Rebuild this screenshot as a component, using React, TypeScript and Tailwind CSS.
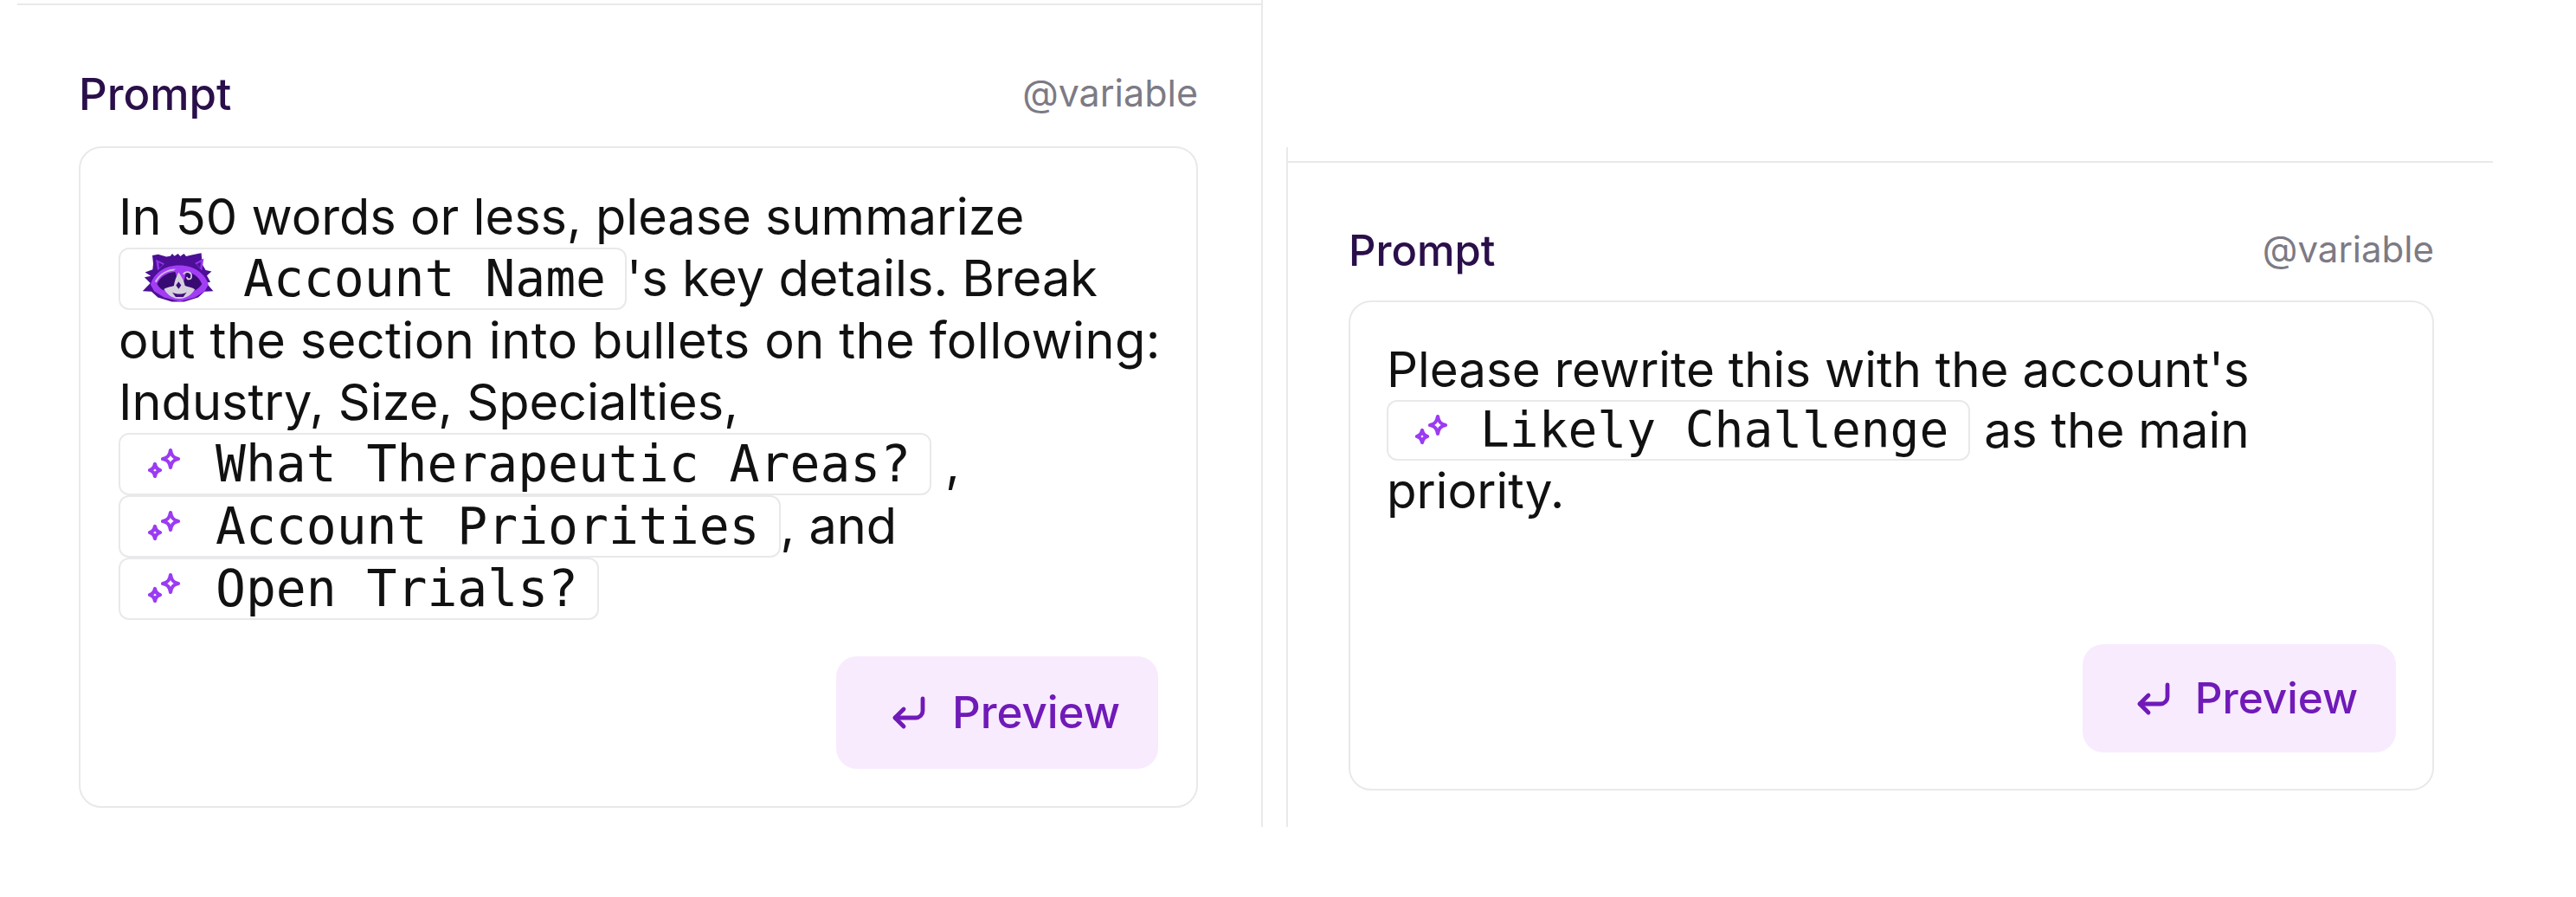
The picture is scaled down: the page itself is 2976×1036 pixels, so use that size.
import React from 'react';
import { CornerDownLeft } from 'lucide-react';

const Sparkles: React.FC = () => (
    <svg className="w-[40px] h-[40px] shrink-0" viewBox="0 0 40 40" fill="none" stroke="#9b3bf2" strokeWidth="4.200" strokeLinejoin="round">
        <path d="M27 4c1 6 3 9 9 10-6 1-8 4-9 10-1-6-3-9-9-10 6-1 8-4 9-10z" />
        <path d="M9 20c.8 4 2 6 6 7-4 1-5.200 3-6 7-.8-4-2-6-6-7 4-1 5.200-3 6-7z" />
    </svg>
);

const Raccoon: React.FC = () => (
    <svg className="w-[84px] h-[62px] shrink-0" viewBox="198 48 244 184">
        <path d="M228 60l20-4 28 8 14-2 6-8 8 8 12-8 8 9 12-9 8 9 12-3 28-6 12-2 3 38 12 20 20 5-16 14 12 22-14 3 24 28-30 2-22 20-48 15h-42l-48-15-22-20-30-2 26-27-20-20 22-5-20-12 26-10 2-20z" fill="#4c0f96" />
        <path d="M240 74l30 14-24 24zM404 70l-30 16 24 26z" fill="#9333ea" />
        <path d="M250 84l14 8-12 12zM394 82l-14 8 12 12z" fill="#4c0f96" />
        <path d="M222 160c8-34 44-66 98-66s92 32 100 66l-12 22-34 22-52 14-54-14-34-22z" fill="#a33df5" />
        <path d="M244 158c10-24 34-40 62-42l14 42-30 24c-18 4-36-6-46-24zM398 158c-10-24-30-40-54-42l-10 42 22 24c16 2 32-8 42-24z" fill="#380b72" />
        <path d="M236 150c14-26 40-44 72-44l-6 6c-26 2-46 14-60 40z" fill="#cdbbe6" />
        <path d="M318 118c-10 18-14 32-16 46-10 4-28 6-34 12 14 22 34 32 52 32s40-10 54-32c-8-6-24-8-34-12-2-12-10-30-22-46z" fill="#d5d0dc" />
        <path d="M318 150l9 12-9 13-9-13zM296 186c14 8 36 8 50 0l-12 16h-26z" fill="#3f0d80" />
        <path d="M334 124c10-12 28-8 28 6s-14 14-16 4" fill="none" stroke="#d5d0dc" strokeWidth="5" />
    </svg>
);

const Chip: React.FC<{ label: string; icon?: 'sparkles' | 'raccoon'; small?: boolean }> = ({ label, icon = 'sparkles', small = false }) => (
    <span className={`inline-flex items-center align-top rounded-[12px] border-2 border-[#e9e9eb] whitespace-nowrap tracking-normal [font-family:'DejaVu_Sans_Mono',monospace] ${small ? 'h-[70px] text-[56.200px] leading-[68px] pr-[23px]' : 'h-[72px] text-[58px] leading-[70px] pr-[22px]'} ${icon === 'raccoon' ? 'pl-[26px] gap-[32px]' : small ? 'pl-[30px] gap-[36px]' : 'pl-[31px] gap-[39px]'}`}>
        {icon === 'raccoon' ? <Raccoon /> : <Sparkles />}
        {label}
    </span>
);

const PromptCard: React.FC<{ cardClass: string; labelClass: string; variableClass: string; textClass: string; buttonRowClass: string; buttonClass: string; children: React.ReactNode }> = ({ cardClass, labelClass, variableClass, textClass, buttonRowClass, buttonClass, children }) => (
    <div>
        <div className="flex items-center justify-between">
            <span className={`font-medium text-[#2a0f4a] ${labelClass}`}>Prompt</span>
            <span className={`text-[#7d7a85] pb-[3px] ${variableClass}`}>@variable</span>
        </div>
        <div className={`flex flex-col rounded-[26px] border-2 border-[#e9e9eb] ${cardClass}`}>
            <div className={`text-[#111111] ${textClass}`}>{children}</div>
            <div className={`flex justify-end mt-auto ${buttonRowClass}`}>
                <button className={`flex items-center justify-end rounded-[24px] bg-[#f8ebfe] text-[#701ab8] font-medium pr-[44px] ${buttonClass}`}>
                    <CornerDownLeft size={48} strokeWidth={2.4} />
                    Preview
                </button>
            </div>
        </div>
    </div>
);

const App: React.FC = () => {
    return (
        <div className="flex w-[2976px] h-[1036px] bg-white font-['Inter',sans-serif]">
            {/* Left panel */}
            <div className="ml-[20px] w-[1439px] h-[955px] border-r-2 border-[#e9e9eb] pt-[4px]">
                <div className="border-t-2 border-[#e9e9eb] pt-[65px] pl-[71px] pr-[73px]">
                    <PromptCard
                        cardClass="mt-[23px] h-[764px] pt-[44px] pb-[43px] pl-[44px] pr-[40px]"
                        labelClass="text-[51px] leading-[72px]"
                        variableClass="text-[43px] leading-[72px]"
                        textClass="text-[57.700px] leading-[71px]"
                        buttonRowClass="mr-[4px]"
                        buttonClass="w-[372px] h-[130px] text-[51px] gap-[26px]"
                    >
                        In 50 words or less, please summarize <Chip icon="raccoon" label="Account Name" />'s key details. Break <span className="tracking-[0.4px]">out the section into bullets on the following:</span> Industry, Size, Specialties, <Chip label="What Therapeutic Areas?" /> , <Chip label="Account Priorities" />, and <Chip label="Open Trials?" />
                    </PromptCard>
                </div>
            </div>

            {/* Right panel */}
            <div className="ml-[27px] mt-[170px] w-[1394px] h-[785px] border-l-2 border-[#e9e9eb] pt-[16px]">
                <div className="border-t-2 border-[#e9e9eb] pt-[64px] pl-[70px] pr-[68px]">
                    <PromptCard
                        cardClass="mt-[20px] h-[566px] pt-[43px] pb-[42px] pl-[42px] pr-[42px]"
                        labelClass="text-[49px] leading-[72px]"
                        variableClass="text-[42px] leading-[72px]"
                        textClass="text-[56.500px] leading-[70px]"
                        buttonRowClass=""
                        buttonClass="w-[362px] h-[125px] text-[49.500px] gap-[24px]"
                    >
                        Please rewrite this with the account's <Chip small label="Likely Challenge" /> as the main priority.
                    </PromptCard>
                </div>
            </div>
        </div>
    );
};

export default App;
